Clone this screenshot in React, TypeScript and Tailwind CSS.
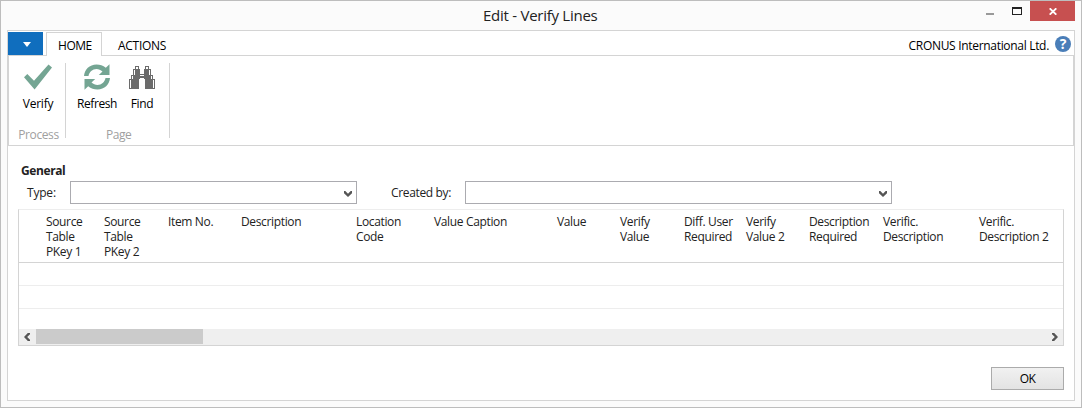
import React from "react";

type Column = { lines: string[]; width: string };

const columns: Column[] = [
  { lines: ["Source", "Table", "PKey 1"], width: "w-[58px]" },
  { lines: ["Source", "Table", "PKey 2"], width: "w-[64px]" },
  { lines: ["Item No."], width: "w-[73px]" },
  { lines: ["Description"], width: "w-[115px]" },
  { lines: ["Location", "Code"], width: "w-[78px]" },
  { lines: ["Value Caption"], width: "w-[123px]" },
  { lines: ["Value"], width: "w-[63px]" },
  { lines: ["Verify", "Value"], width: "w-[64px]" },
  { lines: ["Diff. User", "Required"], width: "w-[62px]" },
  { lines: ["Verify", "Value 2"], width: "w-[63px]" },
  { lines: ["Description", "Required"], width: "w-[74px]" },
  { lines: ["Verific.", "Description"], width: "w-[96px]" },
  { lines: ["Verific.", "Description 2"], width: "w-[84px]" },
];

function CheckIcon() {
  return (
    <svg width="28" height="26" viewBox="0 0 28 26">
      <path d="M0 13.300 3.300 10 10 16.700 24.500 0.500 28 3.500 10.600 25.500Z" fill="#74a593" />
    </svg>
  );
}

function RefreshIcon() {
  return (
    <svg width="26" height="26" viewBox="0 0 26 26" fill="#74a593">
      <path d="M0 12C.5 5.500 5.500.500 12.500.500c3.500 0 6.500 1.100 9.300 3.300L25.500 0.300V11H14.800l3.700-3.600C16.600 5.900 14.800 5 12.500 5 8.500 5 5.200 8 4.500 12Z" />
      <path d="M26 14c-.5 6.500-5.500 11.500-12.500 11.500-3.500 0-6.500-1.100-9.300-3.300L.5 25.700V15h10.700l-3.700 3.600C9.400 20.100 11.200 21 13.500 21c4 0 7.300-3 8-7Z" />
    </svg>
  );
}

function BinocularsIcon() {
  return (
    <svg width="26" height="24" viewBox="0 0 26 24" shapeRendering="crispEdges">
      <path
        d="M6 0h4v3h1v5h4V3h1V0h4v3h2v6h2v4h2v10H16V13h-1v-1h-4v1h-1v10H0V13h2V9h2V3h2Z"
        fill="#6b6b6b"
      />
      <path
        d="M7 1h2v2H7ZM17 1h2v2h-2ZM5 4h1v5H5ZM20 4h1v5h-1ZM3 10h1v3H3ZM22 10h1v3h-1ZM1 14h1v8H1ZM24 14h1v8h-1ZM11 9h4v1h-4Z"
        fill="#fff"
      />
    </svg>
  );
}

function Chevron({ className }: { className: string }) {
  return (
    <svg width="8" height="6" viewBox="0 0 8 6" className={className}>
      <path d="M0 0h1.300L4 2.800 6.700 0H8v2.200L4 6 0 2.200Z" fill="#555" />
    </svg>
  );
}

function Combo({ width }: { width: string }) {
  return (
    <div className={`flex h-[23px] shrink-0 items-center justify-end border border-[#ababb0] bg-white pr-[4px] ${width}`}>
      <Chevron className="mt-[2px]" />
    </div>
  );
}

function TitleBar() {
  return (
    <header className="flex h-[29px] shrink-0">
      <h1 className="grow pt-[4px] pl-[482px] text-[15px] leading-[21px] tracking-[-0.26px] text-[#222]">Edit - Verify Lines</h1>
      <div className="mt-[12px] mr-[18px] h-[2px] w-[8px] bg-[#999]" />
      <div className="mt-[6px] mr-[8px] h-[8px] w-[10px] border border-t-2 border-[#222]" />
      <div className="mr-[6px] flex h-[20px] w-[45px] justify-center bg-[#c75050] pt-[7px]">
        <svg width="8" height="7" viewBox="0 0 8 7">
          <path d="M.7.300 7.300 6.700M7.300.300.7 6.700" stroke="#fff" strokeWidth="1.800" />
        </svg>
      </div>
    </header>
  );
}

function Tabs() {
  return (
    <nav className="flex h-[24px] shrink-0 text-black">
      <div className="mt-px flex h-[23px] w-[35px] items-center justify-center bg-[#106ebe]">
        <svg width="8" height="5" viewBox="0 0 8 5" className="mt-[2px] ml-[2px]">
          <path d="M0 0h8L4 5Z" fill="#fff" />
        </svg>
      </div>
      <div className="z-10 mt-px ml-[3px] h-[24px] w-[56px] border border-b-0 border-[#d4d4d4] bg-white pt-[4px] pl-[11px] leading-[17px] tracking-[-0.45px]">HOME</div>
      <div className="pt-[6px] pl-[16px] leading-[17px] tracking-[-0.27px]">ACTIONS</div>
      <div className="ml-auto pt-[6px] leading-[17px] tracking-[-0.31px]">CRONUS International Ltd.</div>
      <div className="mt-[5px] mr-[3px] ml-[6px] flex size-[16px] items-center justify-center rounded-full bg-[#4a7eb8] text-[14px] leading-none font-bold text-white">?</div>
    </nav>
  );
}

function Ribbon() {
  return (
    <section className="flex h-[91px] shrink-0 border border-[#d4d4d4] text-black">
      <div className="mt-[7px] flex h-[75px] w-[57px] flex-col items-center border-r border-[#d4d4d4]">
        <div className="flex h-[30px] shrink-0 items-start pt-px pl-[2px]"><CheckIcon /></div>
        <span className="mt-[2px] ml-[2px] leading-[17px] tracking-[-0.25px]">Verify</span>
        <span className="mt-[14px] ml-[3px] leading-[17px] tracking-[-0.4px] text-[#a0a0a0]">Process</span>
      </div>
      <div className="mt-[7px] flex h-[75px] w-[104px] flex-col border-r border-[#d4d4d4]">
        <div className="flex h-[49px] shrink-0">
          <div className="flex w-[62px] flex-col items-center">
            <div className="h-[30px] shrink-0 pt-px"><RefreshIcon /></div>
            <span className="mt-[2px] leading-[17px] tracking-[-0.4px]">Refresh</span>
          </div>
          <div className="flex w-[28px] flex-col items-center">
            <div className="h-[30px] shrink-0 pt-[3px]"><BinocularsIcon /></div>
            <span className="mt-[2px] leading-[17px] tracking-[-0.4px]">Find</span>
          </div>
        </div>
        <span className="mt-[14px] ml-[40px] leading-[17px] tracking-[-0.45px] text-[#a0a0a0]">Page</span>
      </div>
    </section>
  );
}

function Grid() {
  return (
    <div className="mt-[5px] ml-[10px] flex h-[137px] w-[1046px] shrink-0 flex-col border border-t-[#ededed] border-r-[#d4d4d4] border-b-[#d4d4d4] border-l-[#d4d4d4]">
      <div className="flex h-[53px] shrink-0 border-b border-[#d4d4d4] pt-[4px] pl-[27px]">
        {columns.map((column, i) => (
          <div key={i} className={`shrink-0 leading-[15px] tracking-[-0.35px] whitespace-nowrap ${column.width}`}>
            {column.lines.map((line) => (
              <div key={line}>{line}</div>
            ))}
          </div>
        ))}
      </div>
      <div className="h-[23px] shrink-0 border-b border-[#ededed]" />
      <div className="h-[23px] shrink-0 border-b border-[#ededed]" />
      <div className="h-[20px] shrink-0" />
      <div className="flex h-[16px] shrink-0 items-center bg-[#efefef]">
        <div className="flex w-[17px] justify-center pr-px"><Chevron className="rotate-90" /></div>
        <div className="h-[15px] w-[167px] self-start bg-[#cbcbcb]" />
        <Chevron className="mr-[4px] ml-auto -rotate-90" />
      </div>
    </div>
  );
}

export default function App() {
  return (
    <div className="flex h-[408px] w-[1082px] flex-col overflow-hidden border border-[#bdbdbd] bg-[#fbfbfb] font-['Open_Sans','Noto_Sans',sans-serif] text-[12px] text-[#222]">
      <TitleBar />
      <main className="ml-[6px] flex h-[371px] w-[1068px] shrink-0 flex-col border border-[#d4d4d4] bg-white">
        <Tabs />
        <Ribbon />
        <h2 className="mt-[16px] ml-[13px] h-[19px] shrink-0 leading-[17px] font-bold tracking-[-0.4px]">General</h2>
        <div className="flex h-[23px] shrink-0 items-center">
          <label className="w-[62px] shrink-0 pl-[19px] leading-[17px] tracking-[-0.2px]">Type:</label>
          <Combo width="w-[287px]" />
          <label className="w-[108px] shrink-0 pl-[34px] leading-[17px] tracking-[-0.35px]">Created by:</label>
          <Combo width="w-[427px]" />
        </div>
        <Grid />
        <button className="mt-[21px] mr-[10px] h-[23px] w-[73px] shrink-0 self-end border border-[#ababab] bg-gradient-to-b from-[#f1f1f1] to-[#e3e3e3] leading-[21px] tracking-[-0.5px] text-black">OK</button>
      </main>
    </div>
  );
}
